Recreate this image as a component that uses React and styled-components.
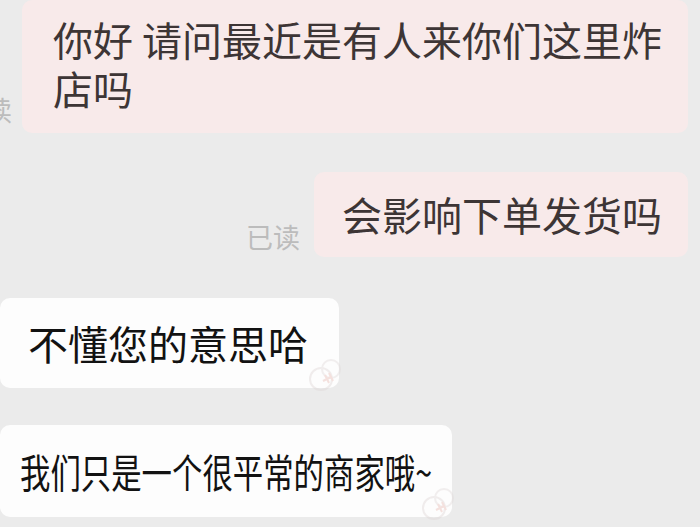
import React from 'react'
import styled, { createGlobalStyle } from 'styled-components'

const Global = createGlobalStyle`
  html, body {
    margin: 0;
    padding: 0;
    background: #ebebeb;
    overflow: hidden;
  }
  body {
    font-family: "Noto Sans CJK SC", "Noto Sans", sans-serif;
  }
`

const Chat = styled.div`
  width: 700px;
  height: 527px;
  padding: 0 12px 0 0;
  box-sizing: border-box;
  display: flex;
  flex-direction: column;
  overflow: hidden;
`

const Row = styled.div`
  display: flex;
  align-items: flex-end;
  justify-content: ${({ $mine }) => ($mine ? 'flex-end' : 'flex-start')};
  gap: ${({ $gap }) => $gap || '14px'};
  margin-top: ${({ $top }) => $top || '0'};
`

const ReadMark = styled.span`
  flex: none;
  font-size: 27px;
  line-height: 27px;
  color: #bcbcbc;
  margin-bottom: ${({ $bottom }) => $bottom || '6px'};
  white-space: nowrap;
`

const Bubble = styled.div`
  position: relative;
  flex: none;
  box-sizing: border-box;
  width: ${({ $width }) => $width || 'auto'};
  padding: ${({ $pad }) => $pad};
  border-radius: 10px;
  background: ${({ $mine }) => ($mine ? '#f8eaea' : '#fdfdfd')};
  color: ${({ $mine }) => ($mine ? '#3d3535' : '#121212')};
  font-size: 40px;
  line-height: 49px;
  white-space: nowrap;
`

const Squeezed = styled.span`
  display: inline-block;
  transform: scaleX(0.76);
  transform-origin: left center;
`

const Stamp = styled.svg`
  position: absolute;
  right: -4px;
  bottom: -5px;
  width: 38px;
  height: 38px;
  opacity: 0.4;
`

function Watermark() {
  return (
    <Stamp viewBox="0 0 38 38">
      <circle cx="16" cy="24" r="11" fill="none" stroke="#ddd5d5" strokeWidth="2" />
      <circle cx="26" cy="14" r="9" fill="none" stroke="#e0d8d8" strokeWidth="2" />
      <path d="M20 20 l4 8 M24 18 l4 8 M18 26 l8 -4" stroke="#e9b8b0" strokeWidth="2" fill="none" />
    </Stamp>
  )
}

export default function App() {
  return (
    <>
      <Global />
      <Chat>
        <Row $mine $gap="10px">
          <ReadMark $bottom="10px">已读</ReadMark>
          <Bubble $mine $pad="15px 26px 20px 31px">
            你好 请问最近是有人来你们这里炸
            <br />
            店吗
          </Bubble>
        </Row>
        <Row $mine $top="39px">
          <ReadMark $bottom="7px">已读</ReadMark>
          <Bubble $mine $pad="18px 26px 18px 28px">
            会影响下单发货吗
          </Bubble>
        </Row>
        <Row $top="41px">
          <Bubble $pad="21px 31px 20px 28px">
            不懂您的意思哈
            <Watermark />
          </Bubble>
        </Row>
        <Row $top="37px">
          <Bubble $width="452px" $pad="22px 20px 21px 20px">
            <Squeezed>我们只是一个很平常的商家哦~</Squeezed>
            <Watermark />
          </Bubble>
        </Row>
      </Chat>
    </>
  )
}
